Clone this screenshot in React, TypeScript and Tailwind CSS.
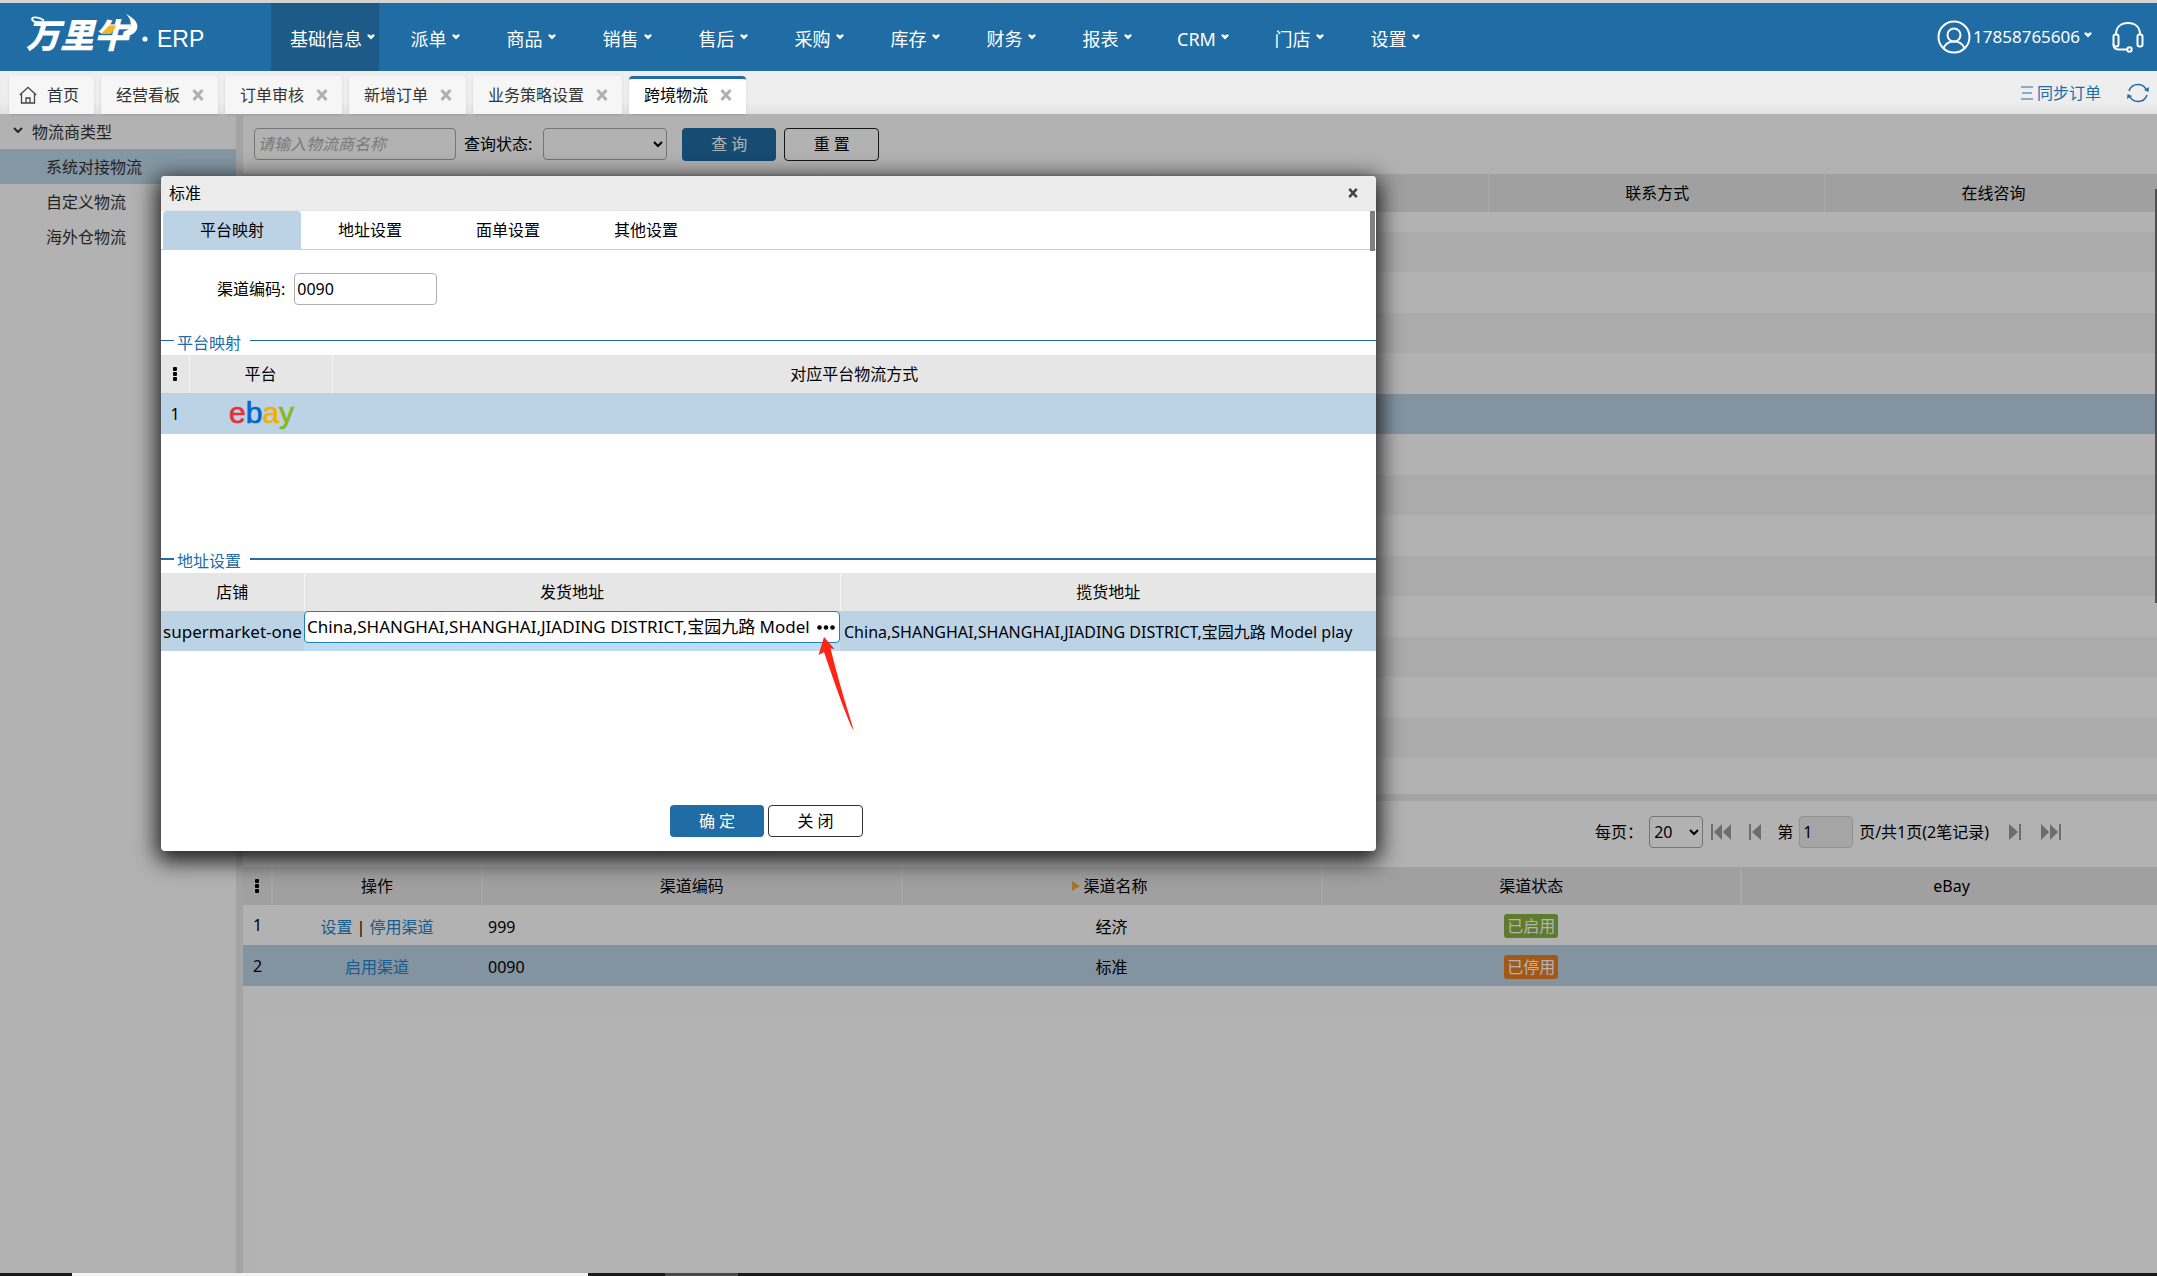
import React, { useState } from 'react';

const ADDRESS = 'China,SHANGHAI,SHANGHAI,JIADING DISTRICT,宝园九路 Model play';

const menus = ['派单', '商品', '销售', '售后', '采购', '库存', '财务', '报表', 'CRM', '门店', '设置'];
const pageTabs = ['经营看板', '订单审核', '新增订单', '业务策略设置', '跨境物流'];
const logisticsTypes = ['系统对接物流', '自定义物流', '海外仓物流'];
const dialogTabs = ['平台映射', '地址设置', '面单设置', '其他设置'];

// Hauteur de chaque ligne visible de la grille, la première est à moitié défilée
const gridRows = [
  'h-5 bg-white',
  'h-10 bg-[#f5f5f5]',
  'h-[41px] bg-white',
  'h-10 bg-[#f5f5f5]',
  'h-[41px] bg-white',
  'h-10 bg-[#bcd3e6]',
  'h-[41px] bg-white',
  'h-10 bg-[#f5f5f5]',
  'h-[41px] bg-white',
  'h-10 bg-[#f5f5f5]',
  'h-[41px] bg-white',
  'h-10 bg-[#f5f5f5]',
  'h-[41px] bg-white',
  'h-10 bg-[#f5f5f5]',
  'h-9 bg-white',
];

const channels = [
  { id: 1, actions: ['设置', '停用渠道'], code: '999', name: '经济', enabled: true },
  { id: 2, actions: ['启用渠道'], code: '0090', name: '标准', enabled: false },
];

const Caret: React.FC = () => (
  <svg className="w-2 h-[6px] mb-1" viewBox="0 0 8 6" fill="currentColor">
    <path d="M.5.500h2L4 1.800 5.500.500h2v1.500L4 5.500.5 2z" />
  </svg>
);

const Cross: React.FC<{ className: string }> = ({ className }) => (
  <svg className={className} viewBox="0 0 12 12" fill="none" stroke="currentColor" strokeWidth="3">
    <path d="M1.500 1l9 10M10.500 1l-9 10" />
  </svg>
);

const MenuDots: React.FC = () => (
  <svg className="w-1 h-[14px] mx-auto" viewBox="0 0 4 14" fill="#000">
    <rect width="4" height="4" rx="1" />
    <rect y="5" width="4" height="4" rx="1" />
    <rect y="10" width="4" height="4" rx="1" />
  </svg>
);

const Logo: React.FC = () => (
  <svg className="w-[200px] h-[60px]" viewBox="0 0 200 60" role="img" aria-label="万里牛 ERP">
    <text x="6" y="43" fill="#fff" fontFamily="Noto Sans CJK SC, sans-serif" fontSize="34" fontWeight="900" fontStyle="italic">万里牛</text>
    <path d="M24 19c-6-1-12-2-12-5 0-2.500 7-2.500 12 1.500" fill="none" stroke="#fff" strokeWidth="1.800" />
    <path d="M106 9c8 4 13 9 11 15-2 5-7 7-15 8l2-6c7 0 10-9 2-17z" fill="#fff" />
    <path d="M81 29l8-8.500h7.500L91 29z" fill="#f0b429" />
    <circle cx="125" cy="34" r="2.600" fill="#fff" />
    <text x="137" y="42" fill="#fff" fontFamily="Liberation Sans, Arial, sans-serif" fontSize="23">ERP</text>
  </svg>
);

const PageIcon: React.FC<{ double?: boolean; flip?: boolean; label: string }> = ({ double, flip, label }) => (
  <button aria-label={label} className={`text-[#9c9c9c] ${flip ? 'rotate-180' : ''}`}>
    {double ? (
      <svg className="w-5 h-4" viewBox="0 0 20 16" fill="currentColor">
        <path d="M0 0h2v16H0zM11 0v16L3 8zM20 0v16l-8-8z" />
      </svg>
    ) : (
      <svg className="w-3 h-4" viewBox="0 0 12 16" fill="currentColor">
        <path d="M0 0h2v16H0zM12 0v16L3 8z" />
      </svg>
    )}
  </button>
);

const Section: React.FC<{ title: string; bold?: boolean; children: React.ReactNode }> = ({ title, bold, children }) => (
  <section>
    <div className="flex items-start h-6 text-[#206ca4]">
      <span className={`w-[13px] mt-[9px] bg-[#206ca4] ${bold ? 'h-[2px]' : 'h-px'}`}></span>
      <h3 className="px-[3px]">{title}</h3>
      <span className={`flex-1 ml-[6px] mt-[9px] bg-[#206ca4] ${bold ? 'h-[2px]' : 'h-px'}`}></span>
    </div>
    {children}
  </section>
);

const Header: React.FC = () => (
  <header className="h-[71px] shrink-0 flex items-stretch bg-[#206ca4] border-t-[3px] border-[#d4d4d4] text-white">
    <div className="w-[271px] pl-5 pt-[2px]">
      <Logo />
    </div>
    <nav className="flex items-stretch text-lg">
      <button className="w-[108px] mr-2 pt-1 pr-1 flex items-center justify-end gap-[5px] bg-[#1e5a87]">
        基础信息 <Caret />
      </button>
      {menus.map(name => (
        <button key={name} className="w-24 pt-1 flex items-center justify-center gap-[5px]">
          {name} <Caret />
        </button>
      ))}
    </nav>
    <div className="ml-auto flex items-center pr-[13px]">
      <svg className="w-[34px] h-[34px]" viewBox="0 0 34 34" fill="none" stroke="#fff" strokeWidth="2">
        <circle cx="17" cy="17" r="15.500" />
        <circle cx="17" cy="15" r="6.500" />
        <path d="M6.500 28c2-4.500 6-6.500 10.500-6.500s8.500 2 10.500 6.500" />
      </svg>
      <button className="flex items-center gap-1 ml-[2px] text-[17px]">
        17858765606 <Caret />
      </button>
      <button aria-label="客服" className="ml-5">
        <svg className="w-8 h-8" viewBox="0 0 32 32" fill="none" stroke="#fff" strokeWidth="2">
          <path d="M4 13.500C4 6 9 2 16 2s12 4 12 11.500" />
          <rect x="1.500" y="13.500" width="5" height="12" rx="2" />
          <rect x="25.500" y="13.500" width="5" height="12" rx="2" />
          <path d="M1.500 23c0 4 2 5.500 5 5.500h8.500" />
          <circle cx="17.500" cy="28.500" r="2.200" />
        </svg>
      </button>
    </div>
  </header>
);

const TabBar: React.FC = () => (
  <div className="h-[43px] shrink-0 flex items-stretch pt-[5px] pl-[9px] gap-[7px] bg-linear-to-b from-[#eeeeee] from-70% to-[#e2e2e2]">
    <button className="w-[85px] flex items-center pl-[10px] gap-[10px] rounded-t bg-[#f6f6f6] text-[#333] shadow-sm">
      <svg className="w-[18px] h-[18px]" viewBox="0 0 18 18" fill="none" stroke="#444" strokeWidth="1.300">
        <path d="M.8 9L9 1.300 17.200 9M2.500 7.500v9.500h13V7.500M7 17v-5h4v5" />
      </svg>
      首页
    </button>
    {pageTabs.map(name => {
      const active = name === '跨境物流';
      return (
        <div
          key={name}
          className={`flex items-center gap-3 pl-[15px] pr-[14px] rounded-t shadow-sm ${active ? 'bg-white text-black border-t-[3px] border-[#206ca4] pb-[3px]' : 'bg-[#f6f6f6] text-[#333]'}`}
        >
          <button>{name}</button>
          <button aria-label={`关闭${name}`} className="text-[#b0b0b0]">
            <Cross className="w-3 h-3" />
          </button>
        </div>
      );
    })}
    <div className="ml-auto mb-1 pr-2 flex items-center text-[#206ca4]">
      <button className="flex items-center gap-1">
        <svg className="w-3 h-[14px]" viewBox="0 0 12 14" stroke="currentColor">
          <path d="M0 1h12M1 7h10M0 13h12" />
        </svg>
        同步订单
      </button>
      <button aria-label="刷新" className="ml-[26px]">
        <svg className="w-[22px] h-5" viewBox="0 0 22 20" fill="none" stroke="currentColor" strokeWidth="1.500">
          <path d="M2 8C3.500 3.500 7 1.500 11 1.500S18 4 19.500 7M20 12c-1.500 4.500-5 6.500-9 6.500S4 16 2.500 13" />
          <path d="M22 4l-.5 5-4.500-2zM0 16l.5-5L5 13z" fill="currentColor" stroke="none" />
        </svg>
      </button>
    </div>
  </div>
);

const Sidebar: React.FC = () => (
  <aside className="w-[236px] shrink-0 text-[#333]">
    <button className="w-full h-[35px] flex items-center pl-[13px] gap-[9px] text-left">
      <svg className="w-[10px] h-[6px] mb-1" viewBox="0 0 10 6" fill="none" stroke="currentColor" strokeWidth="2">
        <path d="M1 1l4 4 4-4" />
      </svg>
      物流商类型
    </button>
    {logisticsTypes.map((name, i) => (
      <button key={name} className={`block w-full h-[35px] pl-[46px] text-left ${i === 0 ? 'bg-[#bfd8ea]' : ''}`}>
        {name}
      </button>
    ))}
  </aside>
);

const Filters: React.FC = () => (
  <form className="h-[60px] shrink-0 flex items-center pl-[11px]" onSubmit={e => e.preventDefault()}>
    <input
      aria-label="物流商名称"
      placeholder="请输入物流商名称"
      className="w-[202px] h-8 px-[3px] rounded border border-[#a8a8a8] placeholder:italic placeholder:text-[#b0b0b0]"
    />
    <label htmlFor="status" className="ml-2">查询状态:</label>
    <select id="status" className="ml-[11px] w-[124px] h-8 pr-1 rounded border border-[#a8a8a8] bg-white">
      <option></option>
    </select>
    <button className="ml-[15px] w-[94px] h-[33px] rounded bg-[#206ca4] text-white">查 询</button>
    <button className="ml-2 w-[95px] h-[33px] rounded border border-[#222] bg-white">重 置</button>
  </form>
);

const ProviderGrid: React.FC = () => (
  <div className="relative overflow-hidden shrink-0">
    <table className="w-[calc(100%+4px)] table-fixed border-collapse">
      <thead>
        <tr className="h-[38px] bg-[#e6e6e6]">
          <th className="w-[29px] border-r-2 border-[#efefef]"></th>
          <th className="w-[210px] border-r-2 border-[#efefef]"></th>
          <th className="border-r-2 border-[#efefef]"></th>
          <th className="border-r-2 border-[#efefef]"></th>
          <th className="border-r-2 border-[#efefef]"></th>
          <th className="border-r-2 border-[#efefef] font-normal">联系方式</th>
          <th className="font-normal">在线咨询</th>
        </tr>
      </thead>
      <tbody>
        {gridRows.map((row, i) => (
          <tr key={i} className={row}>
            <td colSpan={7} className="p-0"></td>
          </tr>
        ))}
      </tbody>
    </table>
    <div className="absolute right-0 top-[15px] w-[2px] h-[414px] bg-[#707070]"></div>
  </div>
);

const Pager: React.FC = () => (
  <div className="h-[66px] shrink-0 flex items-center justify-end pr-24 pb-1">
    <label htmlFor="page-size">每页：</label>
    <select id="page-size" className="ml-[6px] w-[54px] h-8 rounded border border-[#a8a8a8] bg-white">
      <option>20</option>
    </select>
    <div className="flex items-center gap-[18px] ml-2">
      <PageIcon double label="首页" />
      <PageIcon label="上一页" />
    </div>
    <label htmlFor="page-no" className="ml-4">第</label>
    <input id="page-no" disabled defaultValue="1" className="ml-[6px] w-[54px] h-8 px-[3px] rounded border border-[#d0d0d0] bg-[#ededed]" />
    <span className="ml-[6px]">页/共1页(2笔记录)</span>
    <div className="flex items-center gap-5 ml-5">
      <PageIcon flip label="下一页" />
      <PageIcon double flip label="末页" />
    </div>
  </div>
);

const ChannelTable: React.FC = () => (
  <div className="overflow-hidden">
    <table className="w-[calc(100%+4px)] table-fixed border-collapse text-center">
      <thead>
        <tr className="h-[38px] bg-[#e6e6e6]">
          <th className="w-[29px] border-r-2 border-[#efefef]"><MenuDots /></th>
          <th className="w-[210px] border-r-2 border-[#efefef] font-normal">操作</th>
          <th className="border-r-2 border-[#efefef] font-normal">渠道编码</th>
          <th className="border-r-2 border-[#efefef] font-normal">
            <span className="flex items-center justify-center gap-1 pr-1">
              <svg className="w-2 h-[10px]" viewBox="0 0 8 10" fill="#f0a83a">
                <path d="M0 0l8 5-8 5z" />
              </svg>
              渠道名称
            </span>
          </th>
          <th className="border-r-2 border-[#efefef] font-normal">渠道状态</th>
          <th className="font-normal">eBay</th>
        </tr>
      </thead>
      <tbody>
        {channels.map(c => (
          <tr key={c.id} className={c.enabled ? 'h-10' : 'h-[41px] bg-[#bcd3e6]'}>
            <td>{c.id}</td>
            <td className="pt-[3px]">
              {c.actions.map((action, i) => (
                <React.Fragment key={action}>
                  {i > 0 && ' | '}
                  <a href="#" className="text-[#2585cc]">{action}</a>
                </React.Fragment>
              ))}
            </td>
            <td className="pt-[3px] pl-[6px] text-left">{c.code}</td>
            <td className="pt-[3px]">{c.name}</td>
            <td className="pt-[2px]">
              <span className={`inline-block px-[3px] rounded-[3px] text-white ${c.enabled ? 'bg-[#87b042]' : 'bg-[#e88022]'}`}>
                {c.enabled ? '已启用' : '已停用'}
              </span>
            </td>
            <td></td>
          </tr>
        ))}
      </tbody>
    </table>
  </div>
);

const SettingsDialog: React.FC = () => {
  const [code, setCode] = useState('0090');
  const [address, setAddress] = useState(ADDRESS);

  return (
    <div role="dialog" aria-label="标准" className="absolute left-[161px] top-[62px] w-[1215px] rounded bg-white shadow-[0_6px_22px_4px_rgba(0,0,0,0.85)]">
      <div className="h-[35px] flex items-center justify-between pl-2 pr-[18px] rounded-t bg-[#ececec] border-b border-[#e4e4e4]">
        <h2>标准</h2>
        <button aria-label="关闭窗口" className="text-[#444]">
          <Cross className="w-[10px] h-[10px]" />
        </button>
      </div>
      <div role="tablist" className="relative h-[39px] flex pl-[2px] border-b border-[#bcd3e6]">
        {dialogTabs.map((name, i) => (
          <button key={name} role="tab" className={`w-[138px] rounded-t-sm ${i === 0 ? 'bg-[#bcd3e6]' : ''}`}>
            {name}
          </button>
        ))}
        <div className="absolute right-px top-0 w-[5px] h-10 bg-[#808080]"></div>
      </div>

      <div className="pt-[23px] pb-[26px] pl-[56px] flex items-center">
        <label htmlFor="channel-code">渠道编码:</label>
        <input
          id="channel-code"
          value={code}
          onChange={e => setCode(e.target.value)}
          className="ml-[9px] w-[143px] h-8 px-[2px] rounded border border-[#b0b0b0]"
        />
      </div>

      <Section title="平台映射">
        <table className="w-full table-fixed border-collapse text-center">
          <thead>
            <tr className="h-[38px] bg-[#e6e6e6]">
              <th className="w-7 border-r border-[#f4f4f4]"><MenuDots /></th>
              <th className="w-[143px] border-r border-[#f4f4f4] font-normal">平台</th>
              <th className="font-normal">对应平台物流方式</th>
            </tr>
          </thead>
          <tbody>
            <tr className="h-[41px] bg-[#bcd3e6]">
              <td className="p-0">1</td>
              <td className="p-0">
                <svg className="block w-[68px] h-10 mx-auto" viewBox="0 0 68 40" role="img" aria-label="ebay">
                  <text x="2" y="29" fontFamily="Liberation Sans, Arial, sans-serif" fontSize="30" strokeWidth="0.700">
                    <tspan fill="#e53238" stroke="#e53238">e</tspan>
                    <tspan fill="#0064d2" stroke="#0064d2">b</tspan>
                    <tspan fill="#f5af02" stroke="#f5af02">a</tspan>
                    <tspan fill="#86b817" stroke="#86b817">y</tspan>
                  </text>
                </svg>
              </td>
              <td></td>
            </tr>
          </tbody>
        </table>
      </Section>

      <div className="h-[115px]"></div>

      <Section title="地址设置" bold>
        <table className="w-full table-fixed border-collapse text-center">
          <thead>
            <tr className="h-[38px] bg-[#e6e6e6]">
              <th className="w-[143px] border-r border-[#f4f4f4] font-normal">店铺</th>
              <th className="w-[536px] border-r border-[#f4f4f4] font-normal">发货地址</th>
              <th className="font-normal">揽货地址</th>
            </tr>
          </thead>
          <tbody>
            <tr className="h-10 bg-[#bcd3e6]">
              <td className="p-0 pt-[2px] whitespace-nowrap text-[17px]">supermarket-one</td>
              <td className="p-0 align-top bg-[#bddcf1]">
                <div className="relative h-8 flex rounded border border-[#1c7fc8] bg-white">
                  <input
                    aria-label="发货地址"
                    value={address}
                    onChange={e => setAddress(e.target.value)}
                    className="flex-1 min-w-0 pl-[2px] text-[17px]"
                  />
                  <button aria-label="选择地址" className="w-[30px] pl-1 flex items-center justify-center">
                    <svg className="w-[18px] h-[5px]" viewBox="0 0 18 5" fill="#000">
                      <circle cx="2.500" cy="2.500" r="2.300" />
                      <circle cx="9" cy="2.500" r="2.300" />
                      <circle cx="15.500" cy="2.500" r="2.300" />
                    </svg>
                  </button>
                  <svg className="absolute right-[-15px] top-[25px] w-9 h-[93px]" viewBox="0 0 36 93" fill="#ff2414">
                    <path d="M6 0L16.500 12l-4-.500C19 38 27 65 35.500 92.500 34 94 19 54 6 15L.5 18z" />
                  </svg>
                </div>
              </td>
              <td className="pb-0 pt-[2px] px-1 text-left whitespace-nowrap overflow-hidden">{ADDRESS}</td>
            </tr>
          </tbody>
        </table>
      </Section>

      <div className="pt-[154px] pb-[14px] pr-1 flex justify-center gap-1">
        <button className="w-[94px] h-8 rounded bg-[#206ca4] text-white">确 定</button>
        <button className="w-[95px] h-8 rounded border border-[#333] bg-white">关 闭</button>
      </div>
    </div>
  );
};

const App: React.FC = () => {
  return (
    <div className="h-screen flex flex-col overflow-hidden bg-white text-black text-base font-['Noto_Sans','Noto_Sans_CJK_SC',sans-serif]">
      <Header />
      <TabBar />
      <div className="relative flex-1 min-h-0 flex">
        <Sidebar />
        <div className="w-[7px] shrink-0 bg-[#ebebeb]"></div>
        <main className="flex-1 min-w-0 flex flex-col">
          <Filters />
          <ProviderGrid />
          <div className="h-[7px] shrink-0 bg-[#ebebeb]"></div>
          <Pager />
          <ChannelTable />
        </main>
        <div className="absolute inset-0 bg-black/30"></div>
        <SettingsDialog />
      </div>
      {/* Bord supérieur de la barre des tâches */}
      <div className="h-[3px] shrink-0 flex bg-[#1c1a1b]">
        <div className="w-[72px]"></div>
        <div className="w-[516px] bg-[#f3f3f3]"></div>
        <div className="w-[77px]"></div>
        <div className="w-[73px] bg-[#4a4848]"></div>
      </div>
    </div>
  );
};

export default App;
